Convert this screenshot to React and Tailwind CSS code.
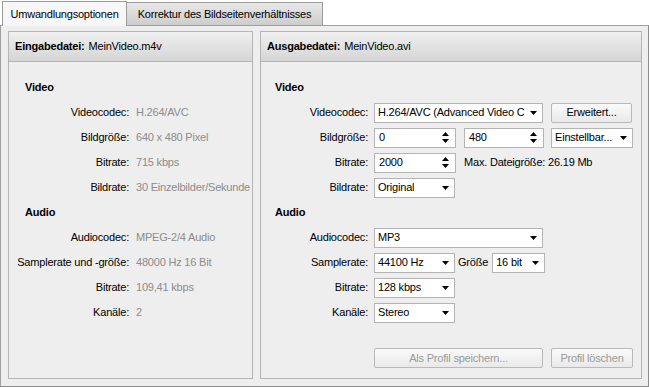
import React from "react";

// kleine Pfeile für Kombinations- und Drehfelder
function ArrowDown() {
  return (
    <svg width="7" height="4" viewBox="0 0 7 4" className="shrink-0">
      <path d="M0 0H7L3.5 4Z" fill="#000" />
    </svg>
  );
}

function SpinArrows() {
  return (
    <svg width="7" height="11" viewBox="0 0 7 11" className="shrink-0">
      <path d="M0 4H7L3.5 0Z" fill="#000" />
      <path d="M0 7H7L3.5 11Z" fill="#000" />
    </svg>
  );
}

function Combo({ value, className }) {
  return (
    <div
      className={
        "h-[20px] bg-white border border-[#b4b4b4] flex items-center justify-between gap-[3px] pl-[3px] pr-[5px] " +
        className
      }
    >
      <span className="whitespace-nowrap overflow-hidden">{value}</span>
      <ArrowDown />
    </div>
  );
}

function Spin({ value, className }) {
  return (
    <div
      className={
        "h-[20px] bg-white border border-[#b4b4b4] flex items-center justify-between pl-[4px] pr-[6px] " +
        className
      }
    >
      <span>{value}</span>
      <SpinArrows />
    </div>
  );
}

function Btn({ label, disabled, className }) {
  return (
    <div
      className={
        "h-[20px] border border-[#b9b9b9] rounded-[2px] bg-linear-to-b from-[#fafafa] to-[#e9e9e9] flex items-center justify-center " +
        (disabled ? "text-[#9a9a9a] " : "text-black ") +
        className
      }
    >
      {label}
    </div>
  );
}

function PanelHeader({ title, file }) {
  return (
    <div className="h-[30px] shrink-0 border-b border-[#b4b4b4] bg-linear-to-b from-[#f0f0f0] to-[#d5d5d5] flex items-center pl-[6px]">
      <span className="font-bold">{title}</span>
      <span className="ml-[4px]">{file}</span>
    </div>
  );
}

const inputRows = [
  { heading: "Video" },
  { label: "Videocodec:", value: "H.264/AVC" },
  { label: "Bildgröße:", value: "640 x 480 Pixel" },
  { label: "Bitrate:", value: "715 kbps" },
  { label: "Bildrate:", value: "30 Einzelbilder/Sekunde" },
  { heading: "Audio" },
  { label: "Audiocodec:", value: "MPEG-2/4 Audio" },
  { label: "Samplerate und -größe:", value: "48000 Hz 16 Bit" },
  { label: "Bitrate:", value: "109,41 kbps" },
  { label: "Kanäle:", value: "2" },
];

function Row({ label, children }) {
  return (
    <div className="h-[25px] flex items-center">
      <span className="w-[107px] text-right shrink-0">{label}</span>
      <div className="ml-[6px] flex items-center">{children}</div>
    </div>
  );
}

export default function App() {
  return (
    <div className="w-[649px] h-[387px] bg-white text-[11px] tracking-[-0.2px] text-black font-['Liberation_Sans',Arial,sans-serif] leading-none overflow-hidden">
      {/* Reiter */}
      <div className="h-[25px] flex items-end pl-[2px]">
        <div className="relative z-10 -mb-px h-[25px] w-[125px] border border-b-0 border-[#9c9c9c] bg-[#f7f7f7] flex items-center justify-center">
          Umwandlungsoptionen
        </div>
        <div className="h-[23px] w-[196px] border border-l-0 border-b-0 border-[#9c9c9c] bg-linear-to-b from-[#e8e8e8] to-[#cdcdcd] flex items-center justify-center">
          Korrektur des Bildseitenverhältnisses
        </div>
      </div>

      <div className="h-[362px] border border-[#a0a0a0] border-r-[#8c8c8c] border-b-[#8c8c8c] bg-[#eeeeee] flex gap-[7px] pl-[7px] pr-[6px] pt-[5px] pb-[7px]">
        {/* Eingabe */}
        <div className="w-[245px] border border-[#b4b4b4] flex flex-col">
          <PanelHeader title="Eingabedatei:" file="MeinVideo.m4v" />
          <div className="pt-[13px]">
            {inputRows.map((r, i) =>
              r.heading ? (
                <div key={i} className="h-[25px] flex items-center pl-[16px] font-bold">
                  {r.heading}
                </div>
              ) : (
                <div key={i} className="h-[25px] flex items-center">
                  <span className="w-[120px] text-right shrink-0">{r.label}</span>
                  <span className="ml-[7px] text-[#8c8c8c] whitespace-nowrap">{r.value}</span>
                </div>
              )
            )}
          </div>
        </div>

        {/* Ausgabe */}
        <div className="w-[382px] border border-[#b4b4b4] flex flex-col">
          <PanelHeader title="Ausgabedatei:" file="MeinVideo.avi" />
          <div className="pt-[13px]">
            <div className="h-[25px] flex items-center pl-[14px] font-bold">Video</div>
            <Row label="Videocodec:">
              <Combo value="H.264/AVC (Advanced Video C" className="w-[169px]" />
              <Btn label="Erweitert..." className="w-[81px] ml-[8px]" />
            </Row>
            <Row label="Bildgröße:">
              <Spin value="0" className="w-[82px]" />
              <Spin value="480" className="w-[80px] ml-[8px]" />
              <Combo value="Einstellbar..." className="w-[82px] ml-[7px]" />
            </Row>
            <Row label="Bitrate:">
              <Spin value="2000" className="w-[82px]" />
              <span className="ml-[8px]">Max. Dateigröße: 26.19 Mb</span>
            </Row>
            <Row label="Bildrate:">
              <Combo value="Original" className="w-[81px]" />
            </Row>
            <div className="h-[25px] flex items-center pl-[14px] font-bold">Audio</div>
            <Row label="Audiocodec:">
              <Combo value="MP3" className="w-[169px]" />
            </Row>
            <Row label="Samplerate:">
              <Combo value="44100 Hz" className="w-[81px]" />
              <span className="ml-[3px] mr-[4px]">Größe</span>
              <Combo value="16 bit" className="w-[53px]" />
            </Row>
            <Row label="Bitrate:">
              <Combo value="128 kbps" className="w-[81px]" />
            </Row>
            <Row label="Kanäle:">
              <Combo value="Stereo" className="w-[81px]" />
            </Row>
          </div>
          <div className="mt-auto flex justify-end gap-[8px] pr-[8px] pb-[10px]">
            <Btn label="Als Profil speichern..." disabled className="w-[169px]" />
            <Btn label="Profil löschen" disabled className="w-[82px]" />
          </div>
        </div>
      </div>
    </div>
  );
}
